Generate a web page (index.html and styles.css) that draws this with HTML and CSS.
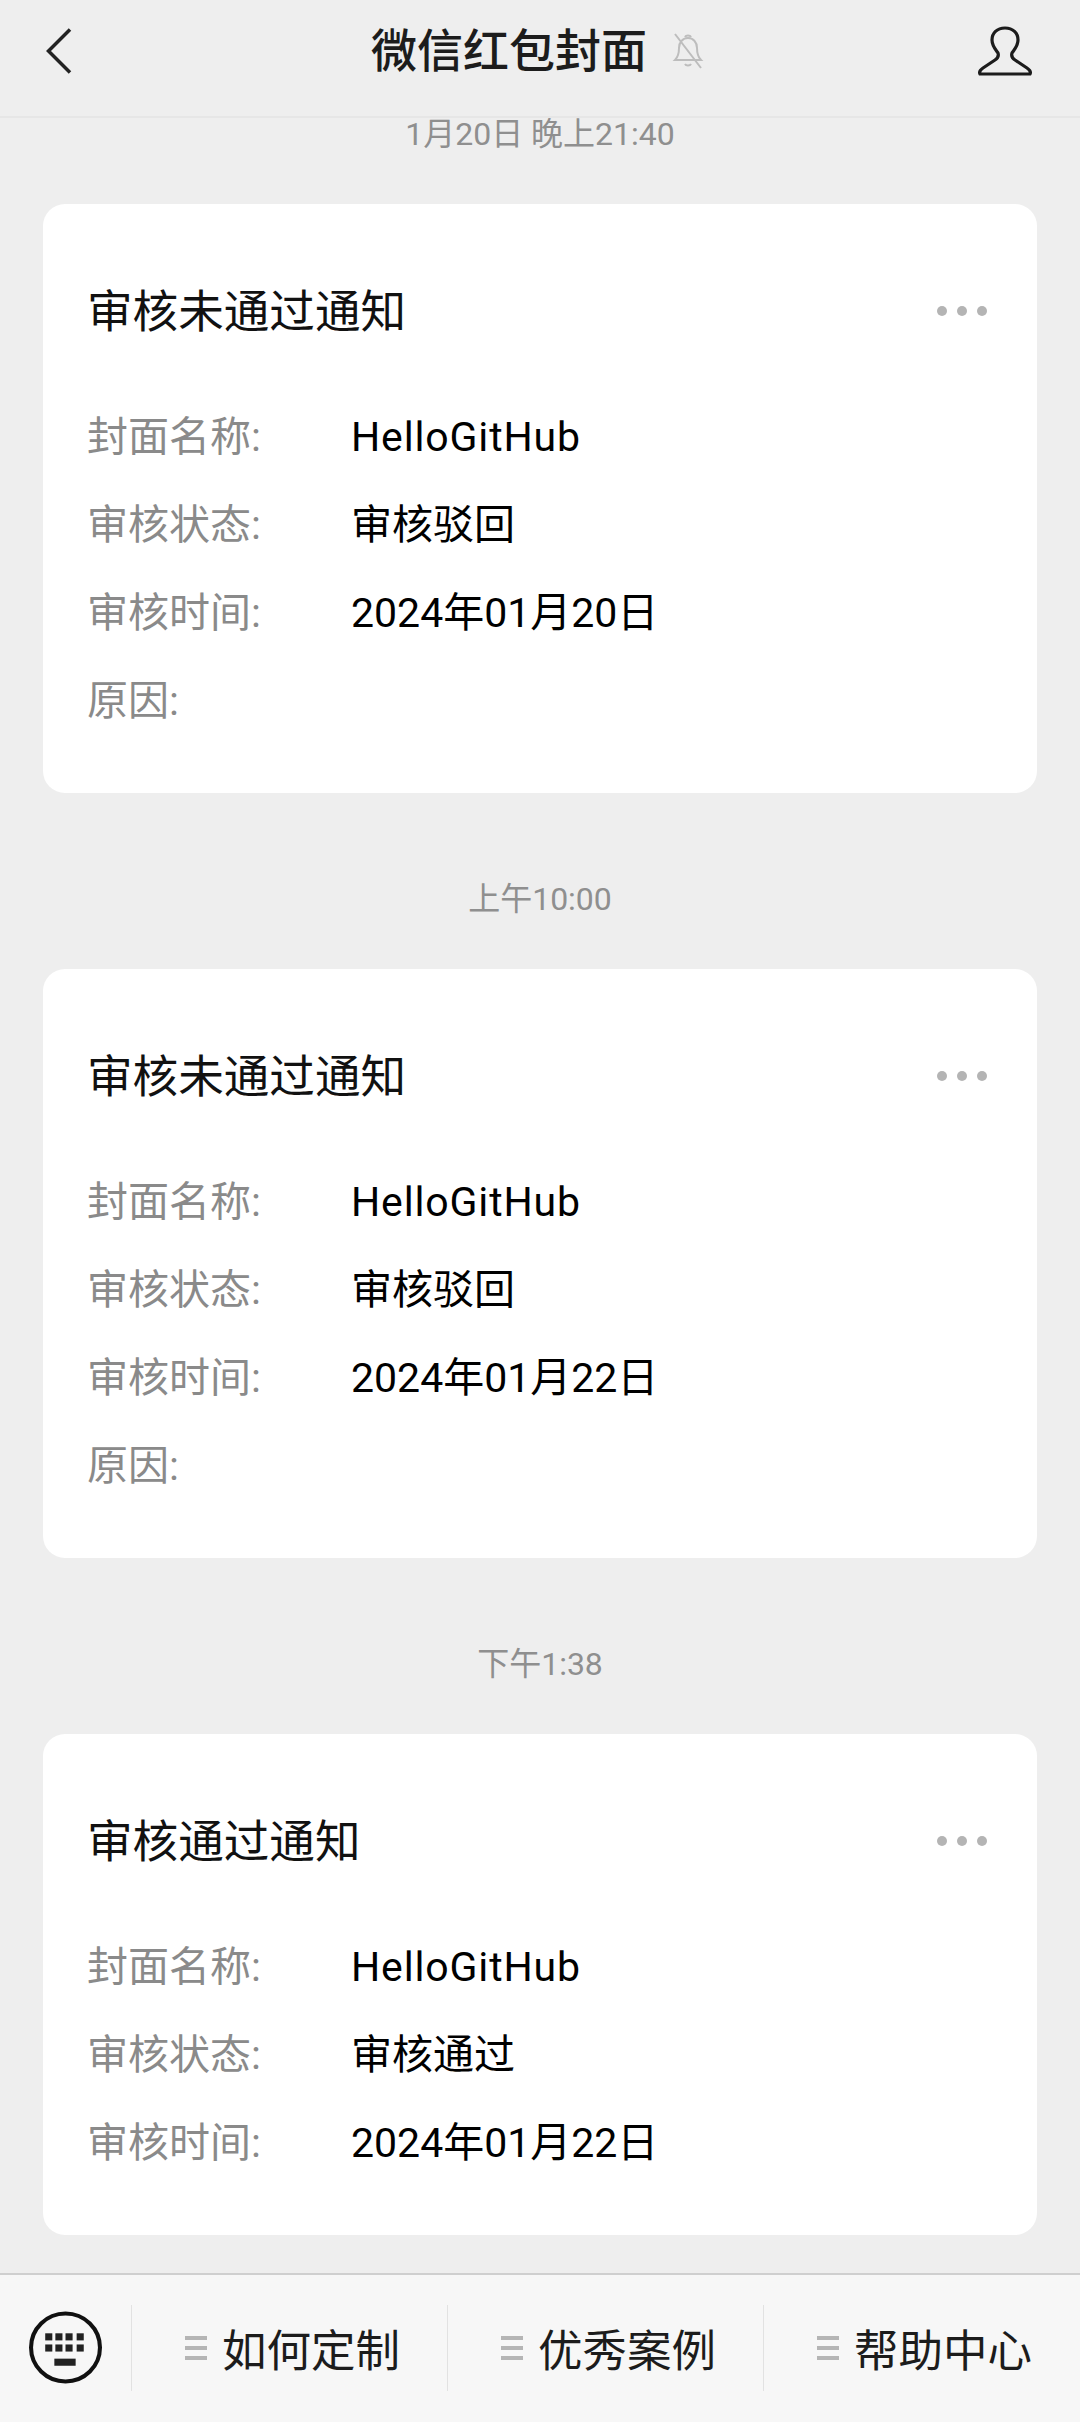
FILE: index.html
```html
<!DOCTYPE html>
<html lang="zh-CN">
<head>
<meta charset="utf-8">
<title>微信红包封面</title>
<link rel="stylesheet" href="styles.css">
</head>
<body>
<div class="app">
  <header class="topbar">
    <svg class="ico-back" viewBox="0 0 26 46"><path d="M24 1.5 2.5 23 24 44.5"/></svg>
    <div class="title-wrap">
      <span class="title">微信红包封面</span>
      <svg class="ico-bell" viewBox="0 0 34 36"><path d="M4 27c3-3 4-6 4-12 0-6 4-10 9-10s9 4 9 10c0 6 1 9 4 12zM14 31c1 2 5 2 6 0M14 4c1-2 5-2 6 0M4 1l26 34"/></svg>
    </div>
    <svg class="ico-user" viewBox="0 0 56 50"><path d="M28 2c-8 0-13 5-13 12 0 6 4 10 6 13 1 3 0 5-3 7L6 42c-3 2-4 4-3 6h50c1-2 0-4-3-6l-12-8c-3-2-4-4-3-7 2-3 6-7 6-13 0-7-5-12-13-12z"/></svg>
  </header>

  <main class="feed">
    <p class="stamp first">1月20日 晚上21:40</p>
    <article class="card">
      <div class="card-head"><h2>审核未通过通知</h2><div class="dots"><i></i><i></i><i></i></div></div>
      <div class="row"><span class="label">封面名称:</span><span class="value latin">HelloGitHub</span></div>
      <div class="row"><span class="label">审核状态:</span><span class="value">审核驳回</span></div>
      <div class="row"><span class="label">审核时间:</span><span class="value">2024年01月20日</span></div>
      <div class="row"><span class="label">原因:</span><span class="value"></span></div>
    </article>

    <p class="stamp">上午10:00</p>
    <article class="card">
      <div class="card-head"><h2>审核未通过通知</h2><div class="dots"><i></i><i></i><i></i></div></div>
      <div class="row"><span class="label">封面名称:</span><span class="value latin">HelloGitHub</span></div>
      <div class="row"><span class="label">审核状态:</span><span class="value">审核驳回</span></div>
      <div class="row"><span class="label">审核时间:</span><span class="value">2024年01月22日</span></div>
      <div class="row"><span class="label">原因:</span><span class="value"></span></div>
    </article>

    <p class="stamp">下午1:38</p>
    <article class="card">
      <div class="card-head"><h2>审核通过通知</h2><div class="dots"><i></i><i></i><i></i></div></div>
      <div class="row"><span class="label">封面名称:</span><span class="value latin">HelloGitHub</span></div>
      <div class="row"><span class="label">审核状态:</span><span class="value">审核通过</span></div>
      <div class="row"><span class="label">审核时间:</span><span class="value">2024年01月22日</span></div>
    </article>
  </main>

  <footer class="menubar">
    <div class="kb-cell">
      <svg class="ico-kb" viewBox="0 0 72 72">
        <ellipse cx="36" cy="36" rx="34" ry="33.5"/>
        <g class="keys">
          <rect x="16" y="22" width="7" height="7"/><rect x="26" y="22" width="7" height="7"/><rect x="36" y="22" width="7" height="7"/><rect x="47" y="22" width="7" height="7"/>
          <rect x="16" y="33" width="7" height="7"/><rect x="26" y="33" width="7" height="7"/><rect x="36" y="33" width="7" height="7"/><rect x="47" y="33" width="7" height="7"/>
          <rect x="25" y="47" width="21" height="7"/>
        </g>
      </svg>
    </div>
    <div class="menu-item"><span class="burger"><i></i><i></i><i></i></span><span class="menu-text">如何定制</span></div>
    <div class="menu-item"><span class="burger"><i></i><i></i><i></i></span><span class="menu-text">优秀案例</span></div>
    <div class="menu-item"><span class="burger"><i></i><i></i><i></i></span><span class="menu-text">帮助中心</span></div>
  </footer>
</div>
</body>
</html>
```
FILE: styles.css
```css
* { box-sizing: border-box; }
html, body { margin: 0; padding: 0; }
body {
  width: 1080px;
  height: 2422px;
  overflow: hidden;
  background: #eeeeee;
  font-family: Roboto, "Noto Sans CJK SC", sans-serif;
  color: #000;
}
.app { display: flex; flex-direction: column; height: 2422px; }

.topbar {
  flex: none;
  height: 118px;
  display: flex;
  align-items: center;
  justify-content: space-between;
  padding: 0 47px 14px 46px;
  border-bottom: 2px solid #e6e6e6;
}
.ico-back { width: 26px; height: 46px; fill: none; stroke: #222; stroke-width: 3.5; }
.title-wrap { display: flex; align-items: center; gap: 24px; margin-left: 27px; }
.title { font-size: 46px; line-height: 60px; font-weight: 500; color: #1c1c1c; }
.ico-bell { width: 34px; height: 36px; fill: none; stroke: #bdbdbd; stroke-width: 2; }
.ico-user { width: 56px; height: 50px; fill: none; stroke: #1c1c1c; stroke-width: 3.2; }

.feed { flex: 1; padding: 0 43px; }
.stamp {
  margin: 90px 0 54px;
  text-align: center;
  font-size: 32px;
  line-height: 32px;
  color: #8f8f8f;
}
.stamp.first { margin: 0 0 54px; }

.card {
  background: #fff;
  border-radius: 22px;
  padding: 77px 45px 48px 44px;
}
.card-head {
  display: flex;
  align-items: center;
  justify-content: space-between;
  height: 60px;
  margin-bottom: 52px;
  padding-right: 5px;
}
.card-head h2 { margin: 4px 0 0; font-size: 45.6px; line-height: 60px; font-weight: 400; color: #111; }
.dots { display: flex; gap: 10px; }
.dots i { display: block; width: 10px; height: 10px; border-radius: 50%; background: #b4b4b4; }

.row {
  display: grid;
  grid-template-columns: 264px 1fr;
  align-items: center;
  height: 88px;
  font-size: 41px;
  line-height: 88px;
}
.label { color: #8a8a8a; }
.value { color: #000; }
.latin { letter-spacing: 0.85px; }

.menubar {
  flex: none;
  height: 149px;
  display: flex;
  align-items: center;
  background: #f7f7f7;
  border-top: 2px solid #cfcfcf;
  padding-bottom: 2px;
}
.kb-cell {
  width: 131px;
  display: flex;
  justify-content: center;
}
.ico-kb { width: 73px; height: 73px; fill: none; stroke: #111; stroke-width: 4; }
.keys rect { fill: #222; stroke: none; }
.menu-item {
  width: 316px;
  height: 86px;
  display: flex;
  align-items: center;
  gap: 15px;
  padding-left: 53px;
  border-left: 1px solid #e2e2e2;
}
.burger { display: flex; flex-direction: column; gap: 6px; }
.burger i { display: block; width: 22px; height: 4px; background: #b5b5b5; }
.menu-text { font-size: 44.5px; line-height: 60px; color: #1c1c1c; font-family: "Noto Sans CJK SC", sans-serif; }
```
